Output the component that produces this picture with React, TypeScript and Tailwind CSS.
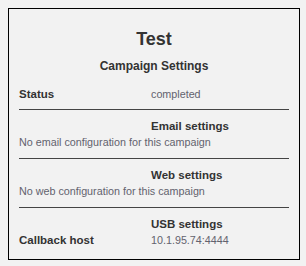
import React from "react";

function Section({ heading, children, last }: { heading: string; children: React.ReactNode; last?: boolean }) {
  return (
    <div className={last ? "pt-2" : "pt-2 pb-2 border-b border-[#444]"}>
      <div className="grid grid-cols-[132px_1fr] leading-4">
        <div />
        <div className="text-[11.5px] font-bold text-[#333]">{heading}</div>
      </div>
      {children}
    </div>
  );
}

export default function App() {
  return (
    <div
      className="min-h-[266px] bg-[#f2f2f2] pt-2 pl-2"
      style={{ fontFamily: '"Liberation Sans", Arial, sans-serif' }}
    >
      <div className="w-[292px] h-[252px] border border-black px-[10px] pt-[20px]">
        <div className="text-[18px] leading-[20px] font-bold text-center text-[#333]">Test</div>
        <div className="mt-[9px] text-[12px] leading-4 font-bold text-center text-[#333]">Campaign Settings</div>
        <div className="mt-[12px] pb-[7px] border-b border-[#444] grid grid-cols-[132px_1fr] leading-4">
          <div className="text-[11.5px] font-bold text-[#333]">Status</div>
          <div className="text-[10.75px] text-[#62626e]">completed</div>
        </div>
        <Section heading="Email settings">
          <div className="text-[10.75px] leading-4 text-[#62626e]">No email configuration for this campaign</div>
        </Section>
        <Section heading="Web settings">
          <div className="text-[10.75px] leading-4 text-[#62626e]">No web configuration for this campaign</div>
        </Section>
        <Section heading="USB settings" last>
          <div className="grid grid-cols-[132px_1fr] leading-4">
            <div className="text-[11.5px] font-bold text-[#333]">Callback host</div>
            <div className="text-[10.75px] text-[#62626e]">10.1.95.74:4444</div>
          </div>
        </Section>
      </div>
    </div>
  );
}
